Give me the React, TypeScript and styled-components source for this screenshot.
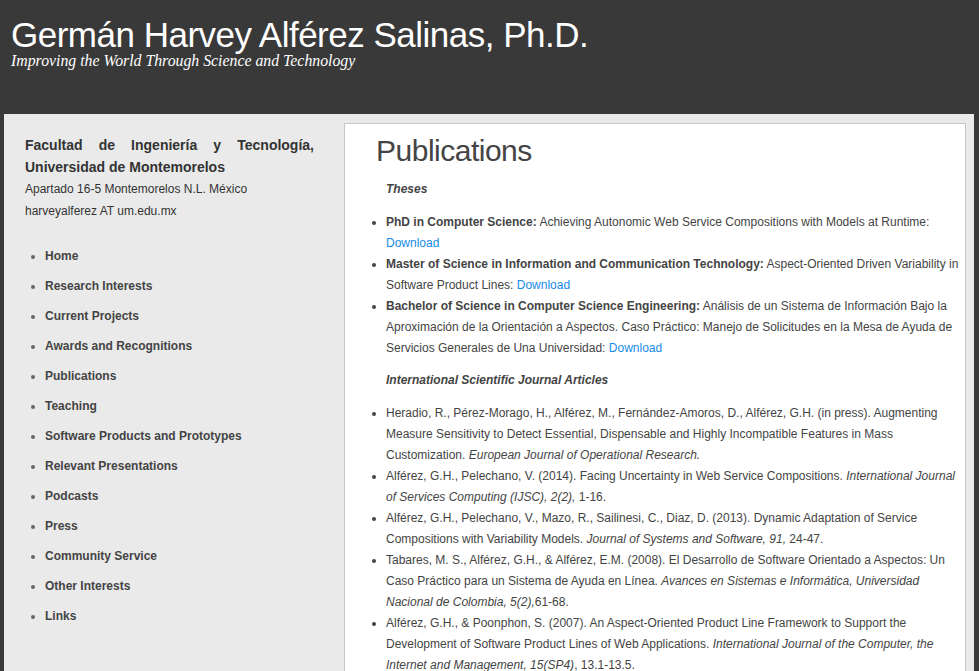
import React from "react";
import styled, { createGlobalStyle } from "styled-components";

const GlobalStyle = createGlobalStyle`
  html, body {
    margin: 0;
    padding: 0;
    overflow: hidden;
  }
  body {
    background: #393939;
    font-family: "Liberation Sans", Arial, Helvetica, sans-serif;
  }
`;

const Page = styled.div`
  min-height: 671px;
  background: #393939;
`;

const Header = styled.header`
  height: 114px;
  box-sizing: border-box;
  padding: 16px 11px 0;
`;

const SiteTitle = styled.h1`
  margin: 0;
  font-family: "Liberation Sans", Arial, sans-serif;
  font-weight: normal;
  font-size: 35px;
  line-height: 38px;
  letter-spacing: -0.5px;
  color: #ffffff;
`;

const Tagline = styled.div`
  margin-top: -2px;
  font-family: "Liberation Serif", Georgia, serif;
  font-style: italic;
  font-size: 15.8px;
  line-height: 18px;
  color: #ffffff;
`;

const Container = styled.div`
  display: flex;
  align-items: flex-start;
  margin: 0 5px 0 4px;
  padding: 0 8px 0 0;
  background: #eaeaea;
  min-height: 560px;
`;

const Sidebar = styled.aside`
  width: 340px;
  flex: 0 0 340px;
  box-sizing: border-box;
  padding: 20px 30px 0 21px;
  color: #333;
`;

const Affiliation = styled.p`
  margin: 0;
  font-size: 14px;
  font-weight: bold;
  line-height: 22px;
  text-align: justify;
  color: #333;
`;

const Contact = styled.p`
  margin: 1px 0 0;
  font-size: 12px;
  line-height: 21.5px;
  color: #333;
`;

const Nav = styled.ul`
  margin: 19px 0 0;
  padding: 0 0 0 20px;
  list-style: disc;
  color: #666;
`;

const NavItem = styled.li`
  font-size: 12px;
  font-weight: bold;
  line-height: 30px;
  color: #666;
`;

const NavLink = styled.a`
  color: #444;
  text-decoration: none;
`;

const Main = styled.main`
  flex: 1;
  margin-top: 9px;
  background: #ffffff;
  border: 1px solid #c6c6c6;
  padding: 9px 6px 0 31px;
  color: #444;
  font-size: 12px;
`;

const PageTitle = styled.h2`
  margin: 0 0 10px;
  font-family: "Liberation Sans", Arial, sans-serif;
  font-weight: normal;
  font-size: 30px;
  line-height: 36px;
  letter-spacing: -0.5px;
  color: #444;
`;

const SectionLabel = styled.p`
  margin: 0 0 12px 10px;
  font-weight: bold;
  font-style: italic;
  line-height: 21px;
  color: #444;
`;

const PubList = styled.ul`
  margin: 0 0 11px;
  padding: 0 0 0 10px;
  list-style: disc;
`;

const PubItem = styled.li`
  line-height: 21px;
  color: #444;
`;

const Degree = styled.strong`
  font-weight: bold;
`;

const Journal = styled.em`
  font-style: italic;
`;

const DownloadLink = styled.a`
  color: #178be6;
  text-decoration: none;
`;

const navItems = [
  "Home",
  "Research Interests",
  "Current Projects",
  "Awards and Recognitions",
  "Publications",
  "Teaching",
  "Software Products and Prototypes",
  "Relevant Presentations",
  "Podcasts",
  "Press",
  "Community Service",
  "Other Interests",
  "Links",
];

export default function App() {
  return (
    <>
      <GlobalStyle />
      <Page>
        <Header>
          <SiteTitle>Germán Harvey Alférez Salinas, Ph.D.</SiteTitle>
          <Tagline>Improving the World Through Science and Technology</Tagline>
        </Header>
        <Container>
          <Sidebar>
            <Affiliation>
              Facultad de Ingeniería y Tecnología, Universidad de Montemorelos
            </Affiliation>
            <Contact>
              Apartado 16-5 Montemorelos N.L. México
              <br />
              harveyalferez AT um.edu.mx
            </Contact>
            <Nav>
              {navItems.map((item) => (
                <NavItem key={item}>
                  <NavLink href="#">{item}</NavLink>
                </NavItem>
              ))}
            </Nav>
          </Sidebar>
          <Main>
            <PageTitle>Publications</PageTitle>
            <SectionLabel>Theses</SectionLabel>
            <PubList>
              <PubItem>
                <Degree>PhD in Computer Science:</Degree> Achieving Autonomic Web
                Service Compositions with Models at Runtime:{" "}
                <DownloadLink href="#">Download</DownloadLink>
              </PubItem>
              <PubItem>
                <Degree>
                  Master of Science in Information and Communication Technology:
                </Degree>{" "}
                Aspect-Oriented Driven Variability in Software Product Lines:{" "}
                <DownloadLink href="#">Download</DownloadLink>
              </PubItem>
              <PubItem>
                <Degree>Bachelor of Science in Computer Science Engineering:</Degree>{" "}
                Análisis de un Sistema de Información Bajo la Aproximación de la
                Orientación a Aspectos. Caso Práctico: Manejo de Solicitudes en la
                Mesa de Ayuda de Servicios Generales de Una Universidad:{" "}
                <DownloadLink href="#">Download</DownloadLink>
              </PubItem>
            </PubList>
            <SectionLabel>International Scientific Journal Articles</SectionLabel>
            <PubList>
              <PubItem>
                Heradio, R., Pérez-Morago, H., Alférez, M., Fernández-Amoros, D.,
                Alférez, G.H. (in press). Augmenting Measure Sensitivity to Detect
                Essential, Dispensable and Highly Incompatible Features in Mass
                Customization. <Journal>European Journal of Operational Research.</Journal>
              </PubItem>
              <PubItem>
                Alférez, G.H., Pelechano, V. (2014). Facing Uncertainty in Web
                Service Compositions.{" "}
                <Journal>International Journal of Services Computing (IJSC), 2(2),</Journal>{" "}
                1-16.
              </PubItem>
              <PubItem>
                Alférez, G.H., Pelechano, V., Mazo, R., Sailinesi, C., Diaz, D.
                (2013). Dynamic Adaptation of Service Compositions with Variability
                Models. <Journal>Journal of Systems and Software, 91,</Journal> 24-47.
              </PubItem>
              <PubItem>
                Tabares, M. S., Alférez, G.H., &amp; Alférez, E.M. (2008). El
                Desarrollo de Software Orientado a Aspectos: Un Caso Práctico para un
                Sistema de Ayuda en Línea.{" "}
                <Journal>
                  Avances en Sistemas e Informática, Universidad Nacional de
                  Colombia, 5(2),
                </Journal>
                61-68.
              </PubItem>
              <PubItem>
                Alférez, G.H., &amp; Poonphon, S. (2007). An Aspect-Oriented Product
                Line Framework to Support the Development of Software Product Lines
                of Web Applications.{" "}
                <Journal>
                  International Journal of the Computer, the Internet and
                  Management, 15(SP4)
                </Journal>
                , 13.1-13.5.
              </PubItem>
            </PubList>
          </Main>
        </Container>
      </Page>
    </>
  );
}
